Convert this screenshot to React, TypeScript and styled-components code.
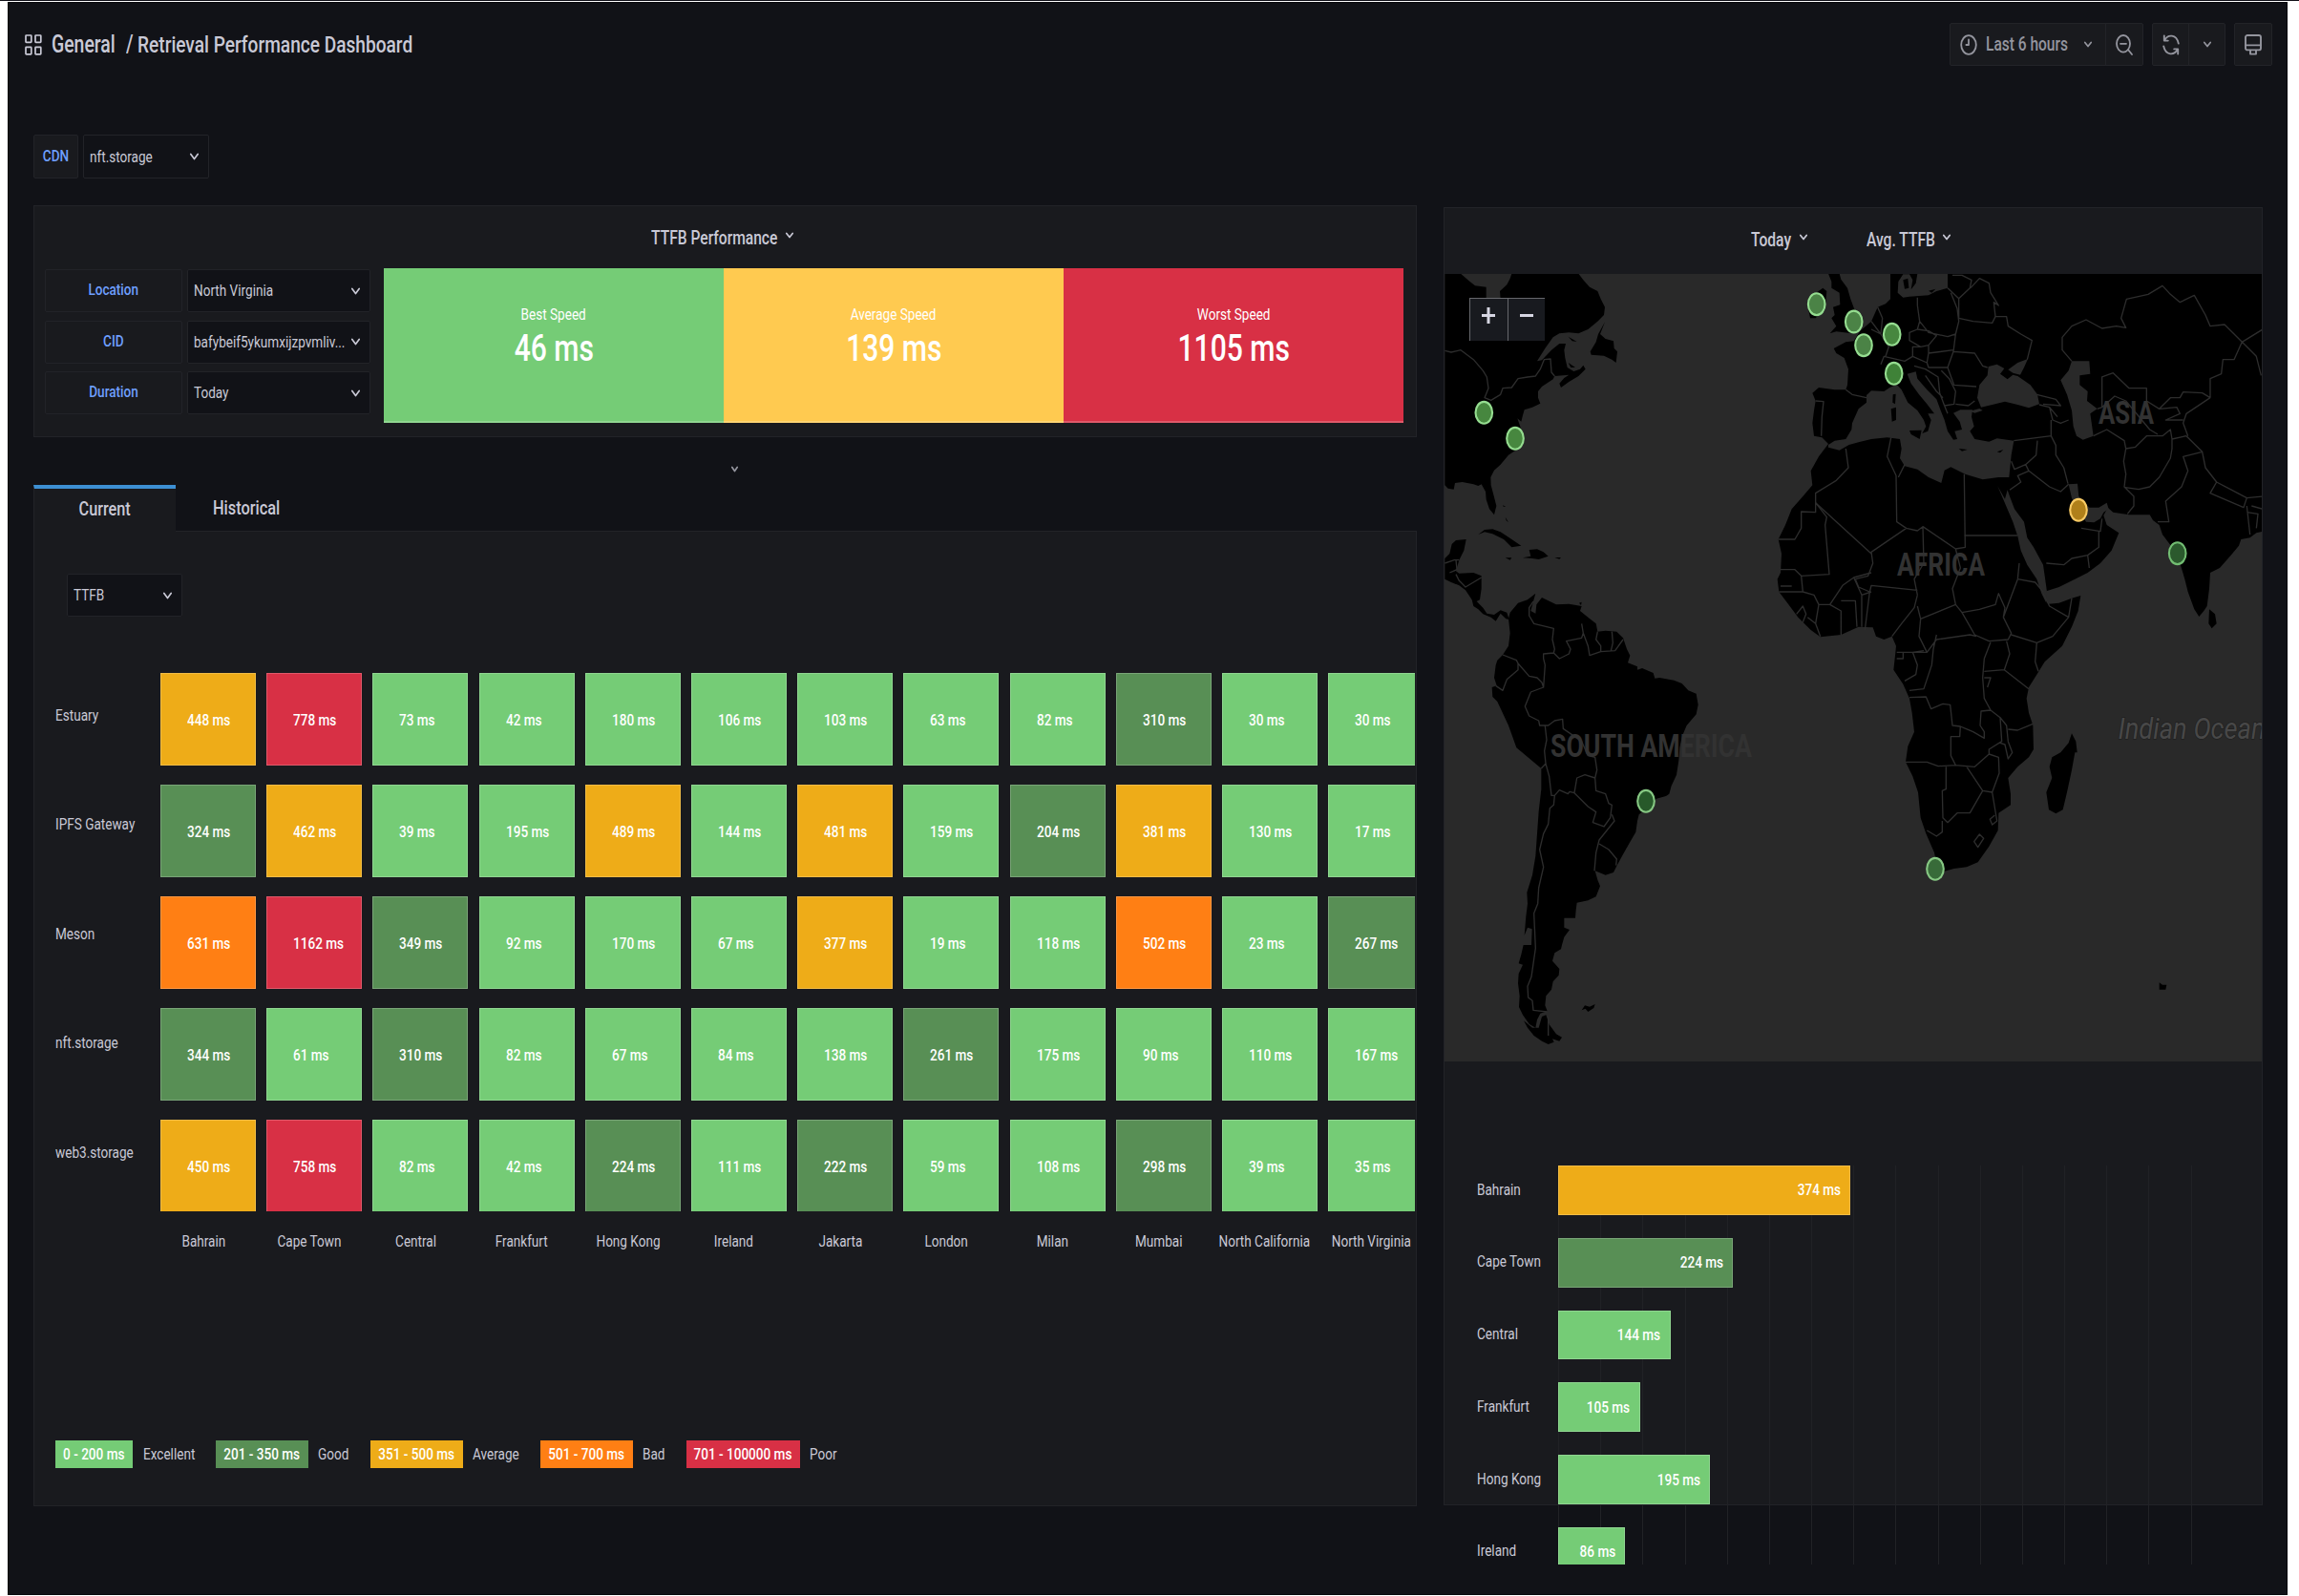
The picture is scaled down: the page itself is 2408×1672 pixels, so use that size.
import React from "react";
import styled, { createGlobalStyle } from "styled-components";

const color = {
  canvas: "#111217",
  panel: "#191a1e",
  line: "#222328",
  text: "#c9c9d6",
  muted: "#94959e",
  link: "#6e9fff",
  excellent: "#75cc76",
  good: "#588f55",
  average: "#eeac18",
  bad: "#ff7f14",
  poor: "#d83045",
  summaryAverage: "#ffca50",
};

const GlobalStyle = createGlobalStyle`
  body { margin: 0; background: #fff; }
  *, *::before, *::after { box-sizing: border-box; }
  #root { font-family: Roboto, "Liberation Sans", sans-serif; color: ${color.text}; }
`;

/* ---------- text ---------- */

type Align = "left" | "center" | "right";
const justify = { left: "flex-start", center: "center", right: "flex-end" };

const TextBox = styled.span<{ $w?: number; $align: Align }>`
  display: flex;
  flex: none;
  justify-content: ${(p) => justify[p.$align]};
  width: ${(p) => (p.$w === undefined ? "auto" : `${p.$w}px`)};
`;

const Condensed = styled.span<{ $size: number; $weight: number; $color: string; $align: Align }>`
  flex: none;
  white-space: nowrap;
  font-size: ${(p) => p.$size}px;
  font-weight: ${(p) => p.$weight};
  line-height: 1.2;
  color: ${(p) => p.$color};
  transform: scaleX(0.78);
  transform-origin: ${(p) => p.$align} center;
`;

interface TextProps {
  children: React.ReactNode;
  size?: number;
  weight?: number;
  tone?: string;
  w?: number;
  align?: Align;
}

const Text = ({ children, size = 17.4, weight = 400, tone = color.text, w, align = "left" }: TextProps) => (
  <TextBox $w={w} $align={align}>
    <Condensed $size={size} $weight={weight} $color={tone} $align={align}>
      {children}
    </Condensed>
  </TextBox>
);

/* ---------- icons ---------- */

const Icon = styled.svg`
  display: block;
  flex: none;
  fill: none;
  stroke: currentColor;
  stroke-linecap: round;
  stroke-linejoin: round;
  overflow: visible;
`;

const Chevron = ({ w = 9, h = 6, tone = color.text }: { w?: number; h?: number; tone?: string }) => (
  <Icon width={w} height={h} viewBox={`0 0 ${w} ${h}`} color={tone} strokeWidth={1.7}>
    <path d={`M0.8 0.5 L${w / 2} ${h - 0.5} L${w - 0.8} 0.5`} />
  </Icon>
);

const AppsIcon = () => (
  <Icon width={18} height={22} viewBox="0 0 18 22" strokeWidth={1.7} color={color.text}>
    <rect x="1" y="1" width="5.8" height="7.4" rx="0.6" />
    <rect x="11" y="1" width="5.8" height="7.4" rx="0.6" />
    <rect x="1" y="13.4" width="5.8" height="7.4" rx="0.6" />
    <rect x="11" y="13.4" width="5.8" height="7.4" rx="0.6" />
  </Icon>
);

const ClockIcon = () => (
  <Icon width={18} height={22} viewBox="0 0 18 22" strokeWidth={1.8}>
    <ellipse cx="9" cy="11" rx="7.8" ry="9.8" />
    <path d="M9 5.5 V11 H6.4" />
  </Icon>
);

const ZoomOutIcon = () => (
  <Icon width={18} height={22} viewBox="0 0 18 22" strokeWidth={1.8}>
    <ellipse cx="8" cy="9.8" rx="7" ry="8.8" />
    <path d="M5 9.8 H11 M13.2 16.2 L17 21" />
  </Icon>
);

const RefreshIcon = () => (
  <Icon width={18} height={22} viewBox="0 0 18 22" strokeWidth={1.9}>
    <path d="M1.8 1.4 V6.6 H5.8 M2.2 6.2 C5.5 -0.2 14.6 -0.6 16.8 9.6" />
    <path d="M16.2 20.6 V15.4 H12.2 M15.8 15.8 C12.5 22.2 3.4 22.6 1.2 12.4" />
  </Icon>
);

const MonitorIcon = () => (
  <Icon width={18} height={22} viewBox="0 0 18 22" strokeWidth={1.9}>
    <rect x="1" y="1" width="16" height="15.4" rx="2" />
    <path d="M1 11.4 H17 M6 16.6 V20.6 H12 V16.6" />
  </Icon>
);

/* ---------- shell ---------- */

const Page = styled.div`
  width: 2408px;
  height: 1672px;
  overflow: hidden;
  background: #fff;
  border-top: 1px solid #101018;
  padding: 1px 12px 1px 8px;
`;

const Shell = styled.main`
  height: 1669px;
  background: ${color.canvas};
  border: 1px solid #08080c;
  padding: 21px 15px 0 17px;
`;

const Header = styled.header`
  display: flex;
  justify-content: space-between;
  height: 45px;
`;

const Breadcrumb = styled.div`
  display: flex;
  align-items: center;
`;

const BreadcrumbIcon = styled.span`
  width: 28px;
`;

const Toolbar = styled.div`
  display: flex;
  gap: 9px;
  color: ${color.muted};
`;

const ButtonGroup = styled.div`
  display: flex;
  border: 1px solid ${color.line};
  border-radius: 2px;
  background: ${color.panel};
`;

const ToolButton = styled.button<{ $w: number; $divided?: boolean }>`
  display: flex;
  align-items: center;
  justify-content: center;
  width: ${(p) => p.$w}px;
  padding: 0;
  border: 0;
  border-right: ${(p) => (p.$divided ? `1px solid ${color.line}` : 0)};
  background: none;
  color: inherit;
  font: inherit;
`;

const TimeButton = styled(ToolButton)`
  justify-content: flex-start;
  padding-left: 10px;
  gap: 9px;
`;

/* ---------- selects ---------- */

const Field = styled.div`
  display: flex;
  gap: 4.5px;
`;

const FieldLabel = styled.div<{ $w: number; $h: number }>`
  display: flex;
  align-items: center;
  justify-content: center;
  width: ${(p) => p.$w}px;
  height: ${(p) => p.$h}px;
  padding-bottom: 2px;
  background: ${color.panel};
  border: 1px solid ${color.line};
  border-radius: 2px;
`;

const SelectBox = styled.div<{ $w: number; $h: number }>`
  display: flex;
  align-items: center;
  justify-content: space-between;
  width: ${(p) => p.$w}px;
  height: ${(p) => p.$h}px;
  padding: 0 10px 0 6px;
  background: ${color.canvas};
  border: 1px solid ${color.line};
  border-radius: 2px;
`;

const Select = ({ value, w, h = 45 }: { value: string; w: number; h?: number }) => (
  <SelectBox $w={w} $h={h}>
    <Text w={w - 30}>{value}</Text>
    <Chevron />
  </SelectBox>
);

const Variables = styled.div`
  display: flex;
  margin: 72px 0 0 9px;
  height: 46px;
`;

const Columns = styled.div`
  display: flex;
  gap: 28px;
  margin: 28px 0 0 9px;
`;

const LeftColumn = styled.section`
  width: 1449px;
`;

const RightColumn = styled.section`
  width: 858px;
  padding-top: 2px;
`;

const Panel = styled.div<{ $h: number }>`
  height: ${(p) => p.$h}px;
  background: ${color.panel};
  border: 1px solid ${color.line};
`;

const TitleChevron = styled.span`
  padding-bottom: 4px;
`;

/* ---------- summary ---------- */

const SummaryTitle = styled.div`
  display: flex;
  align-items: center;
  gap: 8px;
  height: 65px;
  padding: 0 0 0 645.5px;
`;

const SummaryBody = styled.div`
  display: flex;
  padding-left: 10.5px;
`;

const Filters = styled.div`
  display: flex;
  flex-direction: column;
  gap: 8.6px;
  width: 355.5px;
  padding-top: 1px;
`;

const Tile = styled.div<{ $bg: string }>`
  display: flex;
  flex-direction: column;
  align-items: center;
  width: 356px;
  height: 162px;
  padding-top: 38px;
  background: ${(p) => p.$bg};
  box-shadow: inset 0 -2px 0 rgba(255, 255, 255, 0.2);
`;

const TileValue = styled.div`
  margin-top: 2px;
`;

const Collapser = styled.div`
  display: flex;
  justify-content: center;
  height: 50px;
  padding: 31px 0 0 20px;
`;

/* ---------- tabs ---------- */

const Tabs = styled.div`
  display: flex;
  height: 48px;
`;

const Tab = styled.div<{ $active?: boolean }>`
  display: flex;
  align-items: center;
  justify-content: center;
  width: 149px;
  height: 49px;
  margin-bottom: -1px;
  padding: 0 1px ${(p) => (p.$active ? 3 : 0)}px 0;
  position: relative;
  background: ${(p) => (p.$active ? color.panel : "none")};
  border-top: ${(p) => (p.$active ? "4px solid #3d8fd3" : 0)};
  border-left: ${(p) => (p.$active ? `1px solid ${color.line}` : 0)};
`;

const MetricSelect = styled.div`
  padding: 44px 0 0 33.5px;
`;

const Heatmap = styled.div`
  display: flex;
  height: 564px;
  margin: 59px 1px 0 0;
  padding-left: 22px;
  overflow: hidden;
`;

const RowNames = styled.div`
  display: flex;
  flex-direction: column;
  width: 110px;
  padding-top: 34px;
  flex: none;
`;

const RowName = styled.div`
  flex: none;
  height: 114.4px;
`;

const Cells = styled.div`
  display: grid;
  grid-template-columns: repeat(12, 100px);
  grid-auto-rows: 97px;
  gap: 20px 11.2px;
  flex: none;
`;

const CellBox = styled.div<{ $bg: string }>`
  display: flex;
  align-items: center;
  padding: 1px 0 0 27px;
  background: ${(p) => p.$bg};
  border: 1px solid rgba(255, 255, 255, 0.2);
`;

const ColumnNames = styled.div`
  display: grid;
  grid-template-columns: repeat(12, 111.2px);
  padding: 21px 0 0 121.3px;
`;

const ColumnName = styled.div`
  display: flex;
  justify-content: center;
`;

const Legend = styled.div`
  display: flex;
  align-items: center;
  margin-top: 198px;
  padding-left: 22px;
`;

const LegendChip = styled.div<{ $w: number; $bg: string }>`
  display: flex;
  align-items: center;
  justify-content: center;
  width: ${(p) => p.$w}px;
  height: 29px;
  margin-right: 10.5px;
  background: ${(p) => p.$bg};
`;

/* ---------- map panel ---------- */

const MapHeader = styled.div`
  display: flex;
  align-items: center;
  gap: 8px;
  height: 69px;
  padding: 0 0 4px 321px;
`;

const MapHeaderGap = styled.span`
  width: 46px;
`;

const MapFrame = styled.div`
  position: relative;
  height: 825px;
  overflow: hidden;
  background: #292929;
`;

const ZoomControls = styled.div`
  position: absolute;
  left: 26px;
  top: 25px;
  display: flex;
`;

const ZoomButton = styled.button`
  display: flex;
  justify-content: center;
  width: 39.5px;
  height: 45px;
  padding: 9px 0 0;
  border: solid #66676c;
  border-width: 1.5px 0 0 1.5px;
  background: #181a1f;
  color: #d6d6e2;
`;

const MapSvg = styled.svg`
  display: block;
`;

const MapLabel = styled.text`
  font-family: Roboto, sans-serif;
  font-size: 33px;
  font-weight: 700;
  fill: #323232;
`;

const OceanLabel = styled.text`
  font-family: Roboto, sans-serif;
  font-size: 32px;
  font-style: italic;
  fill: #484848;
  stroke: #202020;
  stroke-width: 1.5px;
  paint-order: stroke;
`;

const LandWest =
  "M40 50H90L115 72L135 88L170 92V130H215L213 105L235 85L245 65L250 50H460L475 70L495 92L520 105L530 130L543 155L540 180L520 200L490 225L460 238L430 235L400 238L380 250L355 285L330 325L345 322L375 290L400 270L420 270L415 290L418 315L425 345L445 357L465 350L475 338L482 350L460 372L430 390L405 408L400 395L415 378L430 368L385 372L380 382L345 405L333 420V440L340 458L315 470L290 478L285 495L280 515L268 505L275 525L287 560L270 600L240 620L215 650L195 668L184 690L185 715L193 745L202 780L195 808L180 790L170 760L168 735L155 712L145 717L130 712L95 705L72 708L68 728L50 725L40 715Z" +
  "M543 202L528 240L545 255L570 262L572 285L582 295L578 330L565 320L540 308L500 305L497 295L515 265L522 240Z" +
  "M428 248L455 264L440 262ZM428 330L450 345L436 345Z" +
  "M145 870L165 855L190 853L215 862L240 878L280 905L250 910L225 885L190 868L165 862Z" +
  "M285 943L310 938L305 918L330 916L350 925L365 938L335 948L315 945ZM230 943H250L245 950ZM385 942H405L400 947ZM222 778L232 782H224ZM230 815L240 832L233 826ZM462 1085L470 1082L468 1092Z" +
  "M40 945L55 930L62 900L75 888L107 885L100 920L85 950L75 985L85 992L130 990L155 1000V1040L150 1075L140 1080L160 1100L172 1118L195 1122L215 1108L235 1115L242 1137L232 1135L215 1118L200 1142L185 1130L160 1120L145 1105L130 1095L125 1075L105 1045L85 1030L60 1020L40 1010Z" +
  "M1245 50H1280L1285 68L1305 95L1315 130L1328 165L1350 190V220L1320 238L1270 232L1250 238L1270 215L1255 190L1265 180L1260 155L1282 148L1280 110L1255 95V75Z" +
  "M1188 190L1180 150L1200 115L1228 95L1240 105L1235 160L1205 190Z";

const LandSouthAmerica =
  "M240 -35L245 -55L270 -85L300 -95L325 -115L318 -90L310 -60L325 -52L328 -80L345 -102L365 -92L390 -80L430 -82L470 -75L465 -60L490 -40L515 -20L520 5L545 2L580 5L600 25L612 60L622 80L615 103L645 115V125L660 120L695 135L700 152L715 150L760 158L785 168L805 190L830 200L836 235L830 265L800 300L785 335L778 370L775 410L768 455L752 490L745 515L735 522L705 530L675 560L650 580L645 600L640 635L620 670L600 705L582 738L570 762L545 770L512 757L520 785L528 805L515 838L490 850L455 857L452 880L450 905H415V935L432 942L415 965L408 990L405 1003L385 1015L378 1040L400 1065L398 1085L380 1105L375 1130L358 1150L355 1180L362 1198L340 1205L330 1225L325 1250L305 1238L285 1210L273 1185L275 1150L270 1110L272 1080L285 1052L272 1048L280 1020L287 990H312L314 940L300 935L290 960L295 900L300 860L298 825L315 770L325 710L330 640L335 570L343 500V435L325 420L265 370L240 300L205 225L190 210L188 180L203 175L195 150L200 110L205 95L222 78L240 50L245 10Z" +
  "M288 1228L315 1250L335 1250L345 1215L358 1210L368 1240L390 1270L408 1280L400 1292L378 1285L383 1295L365 1302L345 1292L320 1275L300 1250ZM470 1195L480 1180L495 1184L512 1176L508 1188L490 1200L482 1190Z";

const LandEast =
  "M120 50V130L105 145L80 155L60 200L25 230L5 262L-20 265L-58 285L-50 300L-25 315L-12 350L-15 400L-20 415H-55L-105 408L-125 425L-115 450L-120 480L-125 520L-120 560L-95 565L-75 585L-80 592L-105 625L-130 670L-125 715L-155 750L-190 790L-210 840L-232 885L-222 930L-225 990L-235 1010L-230 1050L-200 1090L-170 1130L-130 1170L-100 1192L-35 1185L20 1160L65 1162L75 1190L100 1200L125 1190L138 1220L135 1250L130 1295L160 1340L180 1385L188 1430L195 1490L175 1535L168 1585L190 1630L207 1680L215 1760L232 1810L258 1870L265 1905L290 1928L320 1920L360 1915L395 1900L430 1850L458 1800L460 1745L498 1720V1685L490 1635L520 1600L555 1570L570 1545L568 1470L555 1430L548 1385L555 1350L580 1310L605 1270L660 1220L690 1160L710 1110L718 1062L690 1070L650 1085L618 1088L605 1070L610 1048L650 1035L700 1010L740 990L780 960L815 920L838 865L800 840L790 810L803 785L820 800L870 808H935L945 825L965 840L975 870L1005 910L1030 960L1045 1010L1055 1050L1075 1105L1090 1128L1105 1110L1115 1095L1122 1040L1125 990L1155 975L1190 935L1215 905L1222 885L1250 880L1270 865L1290 860V50Z" +
  "M1122 1105L1140 1120L1145 1150L1130 1165L1120 1150Z" +
  "M690 1495L703 1520L707 1555H700L690 1610L675 1680L662 1735L640 1747L618 1735L610 1680L628 1635L620 1600L628 1570L655 1555L680 1525ZM965 2278L975 2285H988L985 2300H965Z";

const InlandSeas =
  "M-75 588L-55 575L-20 570L-2 540L0 520L20 475L45 455V432L60 418L100 420L118 408L140 398L155 415L175 455L205 480L225 510L232 530L220 552L238 545L248 510L238 490H258L235 460L210 430L185 395L173 365L200 358L205 380L235 415L265 445L278 480L290 510L300 545L318 572L330 570L322 545L345 540L338 515L318 488L340 478H378L375 500L383 530L370 545L385 570L430 578L455 568L508 575L500 620L493 690L460 690L410 697L355 680L310 658L290 668L280 708L240 690L205 665L165 655L150 630L155 600L150 570L110 565L60 570L20 580L-10 588L-40 605L-75 596Z" +
  "M393 440L400 400L425 370L428 342L455 335L478 348L465 365L488 382L505 368L520 372L560 400L582 430L588 460L555 472L520 462L480 452L440 462L405 470ZM490 352L520 330L552 318L540 345L528 368L505 362ZM370 482L400 474L410 480L385 488Z" +
  "M655 385L680 355L690 325H745L748 365L715 370V400L740 420L738 450L770 475L748 490L758 560L725 572L705 560L695 530L690 480L675 430Z" +
  "M145 75L160 52H180L190 70L185 100L200 80L205 50H300V95L265 105L240 118L180 122L160 125L143 110Z" +
  "M457 718L480 758L488 730L495 750L510 790L540 830L550 880L570 910L600 965L605 1000L612 1050L610 1085L595 1055L580 1010L550 965L530 920L520 875L505 830Z" +
  "M680 712L708 710L712 750L745 785H775L800 770L806 790L790 800L780 820L760 832L735 830L710 790L690 755Z";

const SeaIslands =
  "M180 543L218 542L212 570L185 555ZM122 475L138 470V510L125 515ZM128 430L137 428L135 460L127 455ZM335 600L362 603L345 608ZM455 610L475 603L465 613ZM160 70L175 65L178 95L165 98ZM240 104L262 98L250 110Z";

const BordersWest =
  "M40 292L60 297L90 290L130 320L160 355L172 375L177 410L165 440L185 448L215 430L222 410L250 408L270 380L300 375L325 372L340 350L352 320L372 318L375 360L385 372M40 960L70 950H85M75 950L78 980L55 990M75 995L85 1015L105 1035L155 1005" +
  "M1300 600L1308 660L1270 700L1205 740V800L1160 798V850L1140 885H1088M1205 770L1240 815L1235 840L1248 995L1160 1000L1140 980H1095M1160 1000L1165 1050L1200 1060L1215 1090H1250L1290 1030L1325 1005L1380 990M1090 1050H1165M1215 1090L1205 1150L1220 1190M1250 1090L1285 1110V1185M1285 1078H1330L1335 1160M1350 1060V1160M1325 1005L1350 1060L1380 1050M1145 1120L1165 1095L1175 1120L1165 1145M1205 1150L1180 1130M1095 1032H1130";

const BordersSouthAmerica =
  "M318 -90L305 -70V-45L320 -20L382 -5L378 30L385 60L382 72L350 75V90L355 110L350 180L345 165L330 150L305 145L270 105L265 95L222 78M270 105V125L235 155L222 190L200 175M350 180L310 195L292 240L305 270L335 285L338 300H365L385 285L410 280L412 310L470 350L490 395L512 400L518 440L512 465L515 505L545 515L555 545L565 550L560 590L540 618L505 605L515 572L490 555L447 512L455 465L480 455L512 465M355 302L360 345L353 380L357 420L368 460L375 520H385L400 503L427 515L432 508L447 512M385 520L382 550L370 560L365 610L350 640L338 690L350 745L335 810L332 860L320 890L325 1000L312 1090L300 1120L302 1155L315 1165L318 1195L362 1200M343 435L357 420M565 580L573 600L525 660L515 700L510 757M525 672L555 690L580 720L578 740M382 72L400 90L430 75L435 60L422 35L470 25L475 10L470 -20M475 10L490 50L495 80L530 68V50L515 30L520 5M530 68L575 65L600 30M565 5L568 40L562 65M365 1215V1275";

const BordersEast =
  "M205 125V150L212 200L205 225L180 235V260L215 280L240 275L265 245L240 230L205 225M212 200L240 235L300 248L325 240L335 200L330 160L310 110M300 95L335 128L370 95L375 70L345 55H315M335 128V190L380 200L440 205L450 185L445 140L460 150L435 110L430 80L400 65L372 95M450 185H485L490 215L530 240L565 260L550 320M325 240L318 295L385 300L410 340L425 345M240 275V300L318 290M318 295L300 345L320 400L390 405M215 280H190V310L165 325L100 310L90 335M190 310L235 330L240 300M235 330L240 345H300M60 200L90 240L115 280L105 310M90 240L60 225M80 155L95 190L90 240M195 340L230 350L270 375L275 425L290 465L320 460L325 420L305 380L280 355M325 460L365 465L385 450M230 370L265 420L285 440M290 465L300 490" +
  "M-20 415L0 430L45 440M-115 450L-90 452L-95 500L-97 560" +
  "M580 430L640 445L655 465L600 460M588 462L620 470L630 510L655 520L680 510M620 470L645 500M625 510V560L508 575M625 560L640 590V620L665 660L678 710M582 575L578 620L545 650L510 665L500 640M545 650L555 670L620 720L655 735L680 712M555 670L520 685L530 705L495 730" +
  "M720 850L780 860L785 820M775 860V910L740 935L690 945L665 965L610 960M740 935L745 975" +
  "M758 560L800 540L855 575L860 600L853 640L860 680L855 720L885 750V780L865 805M860 600L890 595L925 560H975L1000 540L1005 570L1050 560M1005 570V600L1000 630L965 690L935 720L900 728L858 722M1050 560L1100 610L1110 660L1145 705M1100 610L1040 625L1055 670L1035 720L985 765L995 830H960M1145 705L1125 740L1230 785L1240 755L1145 705M1240 755L1290 750M1240 780L1250 870M1255 780L1290 790M1240 800L1275 805L1270 850" +
  "M690 325L660 290V250L690 215L735 195L785 222L830 215L860 220L845 190L862 130L930 115L975 88L1000 115L1030 140L1075 118L1110 180L1125 215L1170 210L1225 265L1200 320H1165L1160 365L1125 380V440M1225 265L1290 225M1225 265L1270 310L1285 370M1125 440L1050 490L1040 520L1055 560M1125 440L1100 425L1040 422L1030 440H1000L965 475L925 450V410H870L820 362L785 375V470L825 435L860 450L935 540L960 555M965 475L1020 470L1030 490L985 510H1040M770 475L785 470" +
  "M122 565L110 625L138 685L140 830L170 850M165 650L145 690M-115 770L60 930M170 850L60 925L65 960L50 1000L10 1010M352 680L355 910L325 915L222 845L205 858L170 850M352 873H520M222 845L225 960L195 1010L205 1060M325 915L340 975L315 1040L325 1090L215 1135L205 1095M10 1010L20 1035L55 1050L60 1030L205 1045M55 1050L40 1170M325 1090L345 1115L400 1105L450 1090L460 1055L480 1100L475 1130M345 1115L385 1185L430 1205L490 1200L500 1180L475 1130L520 1010L575 1020L600 1050M520 1010L525 960M600 1055L620 1095L680 1130L690 1070M680 1130L630 1190L580 1210L500 1185M205 1060L195 1100L155 1150L125 1190M215 1135L210 1190L235 1240H140M235 1240L265 1200L370 1185L390 1190M140 1260H160V1240" +
  "M265 1185L255 1230L250 1280L225 1355L180 1360M225 1235L190 1240L205 1280L200 1310L165 1330M180 1382L232 1380L248 1418L285 1402L308 1405L315 1470L340 1473L338 1505H310V1565L325 1595L270 1598L235 1585H168M340 1473L380 1490L415 1510V1490L402 1470L405 1425L435 1422L465 1445L470 1520L430 1545V1560L385 1600L325 1595M435 1208L415 1260L410 1320L415 1385L435 1422M485 1205L495 1245L478 1295L415 1300M478 1295L555 1355M415 1320H435L425 1350M465 1445L485 1470L490 1520L503 1555L490 1575L480 1530L465 1525M490 1482L520 1485L568 1465M430 1560L460 1570L462 1620L440 1680L410 1675L360 1600M410 1675L370 1745H330L300 1775L285 1760L283 1675L295 1670V1600M283 1770V1805L265 1818L235 1800M440 1680L450 1740L455 1770L440 1782L433 1765L448 1752M383 1835L400 1812L413 1825L395 1853ZM580 1210L575 1270L585 1300";

const markers = [
  { x: 1554.3, y: 432.3, fill: "#47873f", ring: "#95dd90" },
  { x: 1587, y: 459.3, fill: "#47873f", ring: "#95dd90" },
  { x: 1902.7, y: 318.7, fill: "#4b8346", ring: "#95dd90" },
  { x: 1941.7, y: 337, fill: "#4b8346", ring: "#95dd90" },
  { x: 1952, y: 361.7, fill: "#4b8346", ring: "#95dd90" },
  { x: 1981.7, y: 350.3, fill: "#47873f", ring: "#95dd90" },
  { x: 1983.7, y: 391.3, fill: "#3f8238", ring: "#95dd90" },
  { x: 2177, y: 534.3, fill: "#b0801a", ring: "#f8ca63" },
  { x: 2280.7, y: 579.7, fill: "#2b592d", ring: "#72bd72" },
  { x: 1724, y: 839.3, fill: "#27592a", ring: "#86c883" },
  { x: 2027, y: 910.3, fill: "#386b39", ring: "#86c883" },
];

const WorldMap = () => (
  <MapSvg width={856} height={825} viewBox="1513 287 856 825">
    <g transform="translate(1500 270) scale(0.33333)">
      <path d={LandWest} fill="#000" />
    </g>
    <g transform="translate(1500 660) scale(0.33333)">
      <path d={LandSouthAmerica} fill="#000" />
      <path d={BordersSouthAmerica} fill="none" stroke="#2d2d2d" strokeWidth={4} strokeLinejoin="round" />
    </g>
    <g transform="translate(1940 270) scale(0.33333)">
      <path d={LandEast} fill="#000" />
      <path d={InlandSeas} fill="#292929" />
      <path d={SeaIslands} fill="#000" />
      <path d={BordersEast} fill="none" stroke="#2d2d2d" strokeWidth={4} strokeLinejoin="round" />
    </g>
    <g transform="translate(1500 270) scale(0.33333)">
      <path d={BordersWest} fill="none" stroke="#2d2d2d" strokeWidth={4} strokeLinejoin="round" />
    </g>
    <MapLabel x={2198} y={444} textLength={58} lengthAdjust="spacingAndGlyphs">ASIA</MapLabel>
    <MapLabel x={1987} y={602.5} textLength={92} lengthAdjust="spacingAndGlyphs">AFRICA</MapLabel>
    <MapLabel x={1624} y={793} textLength={211} lengthAdjust="spacingAndGlyphs">SOUTH AMERICA</MapLabel>
    <OceanLabel x={2218.5} y={774} textLength={154} lengthAdjust="spacingAndGlyphs">Indian Ocean</OceanLabel>
    {markers.map((m) => (
      <ellipse key={`${m.x}`} cx={m.x} cy={m.y} rx={8.8} ry={11.4} fill={m.fill} stroke={m.ring} strokeWidth={2.1} />
    ))}
  </MapSvg>
);

/* ---------- bar chart ---------- */

const Chart = styled.div`
  position: relative;
  display: flex;
  height: 418px;
  margin-top: 109px;
  overflow: hidden;
`;

const BarNames = styled.div`
  width: 118.5px;
  padding: 14.5px 0 0 34px;
`;

const BarName = styled.div`
  height: 75.8px;
`;

const Plot = styled.div`
  display: flex;
  flex-direction: column;
  gap: 24px;
  width: 664px;
  background: repeating-linear-gradient(90deg, #212226 0 1px, transparent 1px 44.17px);
`;

const Bar = styled.div<{ $bg: string }>`
  display: flex;
  flex: none;
  align-items: center;
  justify-content: flex-end;
  height: 51.8px;
  padding-right: 9px;
  background: ${(p) => p.$bg};
  border: 1px solid rgba(255, 255, 255, 0.2);
`;

/* ---------- data ---------- */

const levelColor = (ms: number) => {
  if (ms <= 200) return color.excellent;
  if (ms <= 350) return color.good;
  if (ms <= 500) return color.average;
  if (ms <= 700) return color.bad;
  return color.poor;
};

const locations = [
  "Bahrain", "Cape Town", "Central", "Frankfurt", "Hong Kong", "Ireland",
  "Jakarta", "London", "Milan", "Mumbai", "North California", "North Virginia",
];

const providers = [
  { name: "Estuary", ms: [448, 778, 73, 42, 180, 106, 103, 63, 82, 310, 30, 30] },
  { name: "IPFS Gateway", ms: [324, 462, 39, 195, 489, 144, 481, 159, 204, 381, 130, 17] },
  { name: "Meson", ms: [631, 1162, 349, 92, 170, 67, 377, 19, 118, 502, 23, 267] },
  { name: "nft.storage", ms: [344, 61, 310, 82, 67, 84, 138, 261, 175, 90, 110, 167] },
  { name: "web3.storage", ms: [450, 758, 82, 42, 224, 111, 222, 59, 108, 298, 39, 35] },
];

const legend = [
  { range: "0 - 200 ms", label: "Excellent", bg: color.excellent, chip: 81, w: 76.5 },
  { range: "201 - 350 ms", label: "Good", bg: color.good, chip: 96.5, w: 55 },
  { range: "351 - 500 ms", label: "Average", bg: color.average, chip: 96.5, w: 71 },
  { range: "501 - 700 ms", label: "Bad", bg: color.bad, chip: 96.5, w: 46 },
  { range: "701 - 100000 ms", label: "Poor", bg: color.poor, chip: 118.5, w: 40 },
];

const summary = [
  { label: "Best Speed", value: "46 ms", bg: color.excellent },
  { label: "Average Speed", value: "139 ms", bg: color.summaryAverage },
  { label: "Worst Speed", value: "1105 ms", bg: color.poor },
];

const filters = [
  { label: "Location", value: "North Virginia" },
  { label: "CID", value: "bafybeif5ykumxijzpvmliv..." },
  { label: "Duration", value: "Today" },
];

const averages = [
  { name: "Bahrain", ms: 374 },
  { name: "Cape Town", ms: 224 },
  { name: "Central", ms: 144 },
  { name: "Frankfurt", ms: 105 },
  { name: "Hong Kong", ms: 195 },
  { name: "Ireland", ms: 86 },
];

const PX_PER_MS = 0.8195;

export default function App() {
  return (
    <>
      <GlobalStyle />
      <Page>
        <Shell>
          <Header>
            <Breadcrumb>
              <BreadcrumbIcon><AppsIcon /></BreadcrumbIcon>
              <Text size={24.9} weight={500} w={77.5}>General</Text>
              <Text size={24.9} weight={500} w={12.5}>/</Text>
              <Text size={24.5} weight={500} w={290}>Retrieval Performance Dashboard</Text>
            </Breadcrumb>
            <Toolbar>
              <ButtonGroup>
                <TimeButton $w={162.7} $divided>
                  <ClockIcon />
                  <Text size={19.9} weight={500} tone={color.muted} w={94}>Last 6 hours</Text>
                  <Chevron w={8} h={5} tone={color.muted} />
                </TimeButton>
                <ToolButton $w={38.3}><ZoomOutIcon /></ToolButton>
              </ButtonGroup>
              <ButtonGroup>
                <ToolButton $w={38.3} $divided><RefreshIcon /></ToolButton>
                <ToolButton $w={36.5}><Chevron w={8} h={5} tone={color.muted} /></ToolButton>
              </ButtonGroup>
              <ButtonGroup>
                <ToolButton $w={38.2}><MonitorIcon /></ToolButton>
              </ButtonGroup>
            </Toolbar>
          </Header>

          <Variables>
            <Field>
              <FieldLabel $w={47} $h={46}><Text weight={500} tone={color.link} align="center">CDN</Text></FieldLabel>
              <Select value="nft.storage" w={132} h={46} />
            </Field>
          </Variables>

          <Columns>
            <LeftColumn>
              <Panel $h={243}>
                <SummaryTitle>
                  <Text size={20} weight={500} w={133}>TTFB Performance</Text>
                  <TitleChevron><Chevron w={8} h={5} /></TitleChevron>
                </SummaryTitle>
                <SummaryBody>
                  <Filters>
                    {filters.map((f) => (
                      <Field key={f.label}>
                        <FieldLabel $w={144.5} $h={45}>
                          <Text weight={500} tone={color.link} align="center">{f.label}</Text>
                        </FieldLabel>
                        <Select value={f.value} w={192} />
                      </Field>
                    ))}
                  </Filters>
                  {summary.map((s) => (
                    <Tile key={s.label} $bg={s.bg}>
                      <Text tone="#fff" align="center">{s.label}</Text>
                      <TileValue><Text tone="#fff" size={38.5} weight={500} align="center">{s.value}</Text></TileValue>
                    </Tile>
                  ))}
                </SummaryBody>
              </Panel>

              <Collapser><Chevron w={7} h={5} tone={color.muted} /></Collapser>

              <Tabs>
                <Tab $active><Text size={20.8} weight={500} align="center">Current</Text></Tab>
                <Tab><Text size={21} weight={500} align="center">Historical</Text></Tab>
              </Tabs>
              <Panel $h={1022}>
                <MetricSelect><Select value="TTFB" w={121} /></MetricSelect>
                <Heatmap>
                  <RowNames>
                    {providers.map((p) => (
                      <RowName key={p.name}><Text>{p.name}</Text></RowName>
                    ))}
                  </RowNames>
                  <Cells>
                    {providers.flatMap((p) =>
                      p.ms.map((ms, i) => (
                        <CellBox key={`${p.name}-${i}`} $bg={levelColor(ms)}>
                          <Text weight={500} tone="#fff">{ms} ms</Text>
                        </CellBox>
                      ))
                    )}
                  </Cells>
                </Heatmap>
                <ColumnNames>
                  {locations.map((name) => (
                    <ColumnName key={name}><Text align="center">{name}</Text></ColumnName>
                  ))}
                </ColumnNames>
                <Legend>
                  {legend.map((l) => (
                    <React.Fragment key={l.label}>
                      <LegendChip $w={l.chip} $bg={l.bg}>
                        <Text weight={500} tone="#fff" align="center">{l.range}</Text>
                      </LegendChip>
                      <Text w={l.w}>{l.label}</Text>
                    </React.Fragment>
                  ))}
                </Legend>
              </Panel>
            </LeftColumn>

            <RightColumn>
              <Panel $h={1360}>
                <MapHeader>
                  <Text size={20} weight={500} w={43}>Today</Text>
                  <TitleChevron><Chevron w={8} h={5} /></TitleChevron>
                  <MapHeaderGap />
                  <Text size={20} weight={500} w={72}>Avg. TTFB</Text>
                  <TitleChevron><Chevron w={8} h={5} /></TitleChevron>
                </MapHeader>
                <MapFrame>
                  <WorldMap />
                  <ZoomControls>
                    <ZoomButton>
                      <Icon width={14} height={17} viewBox="0 0 14 17" strokeWidth={3}>
                        <path strokeLinecap="butt" d="M0 8.5 H14 M7 0 V17" />
                      </Icon>
                    </ZoomButton>
                    <ZoomButton>
                      <Icon width={14} height={17} viewBox="0 0 14 17" strokeWidth={3}>
                        <path strokeLinecap="butt" d="M0 8.5 H14" />
                      </Icon>
                    </ZoomButton>
                  </ZoomControls>
                </MapFrame>
                <Chart>
                  <BarNames>
                    {averages.map((a) => (
                      <BarName key={a.name}><Text>{a.name}</Text></BarName>
                    ))}
                  </BarNames>
                  <Plot>
                    {averages.map((a) => (
                      <Bar key={a.name} $bg={levelColor(a.ms)} style={{ width: a.ms * PX_PER_MS }}>
                        <Text weight={500} tone="#fff" align="right">{a.ms} ms</Text>
                      </Bar>
                    ))}
                  </Plot>
                </Chart>
              </Panel>
            </RightColumn>
          </Columns>
        </Shell>
      </Page>
    </>
  );
}
